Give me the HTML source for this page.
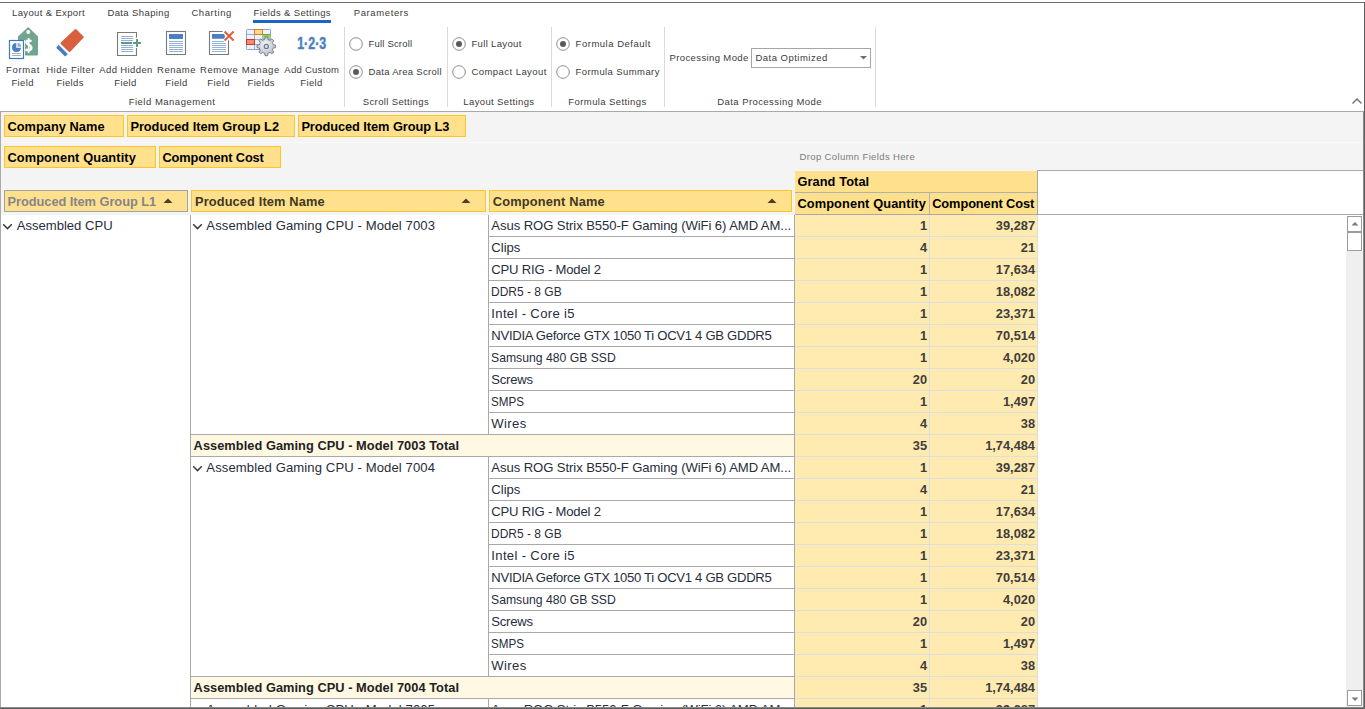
<!DOCTYPE html>
<html><head><meta charset="utf-8"><title>Pivot</title>
<style>
html,body{margin:0;padding:0;}
body{width:1365px;height:709px;overflow:hidden;position:relative;background:#fff;font-family:"Liberation Sans",sans-serif;}
.t{position:absolute;white-space:nowrap;line-height:1.149;}
.r{position:absolute;box-sizing:border-box;}
svg{position:absolute;overflow:visible;}
</style></head><body>
<div class="r" style="left:0px;top:2px;width:1365px;height:1px;background:#6a6a6a;"></div>
<div class="t" style="left:12px;top:8.25px;font-size:9.5px;color:#3b3b3b;letter-spacing:0.360px;">Layout &amp; Export</div>
<div class="t" style="left:107.4px;top:8.25px;font-size:9.5px;color:#3b3b3b;letter-spacing:0.392px;">Data Shaping</div>
<div class="t" style="left:191.4px;top:8.25px;font-size:9.5px;color:#3b3b3b;letter-spacing:0.568px;">Charting</div>
<div class="t" style="left:253.5px;top:8.25px;font-size:9.5px;color:#3b3b3b;letter-spacing:0.360px;">Fields &amp; Settings</div>
<div class="t" style="left:353.7px;top:8.25px;font-size:9.5px;color:#3b3b3b;letter-spacing:0.617px;">Parameters</div>
<div class="r" style="left:253px;top:20px;width:78px;height:3px;background:#1a65c6;"></div>
<div class="t" style="left:-17.0px;width:80px;text-align:center;top:65.25px;font-size:9.5px;color:#3b3b3b;letter-spacing:0.651px;">Format</div>
<div class="t" style="left:-17.4px;width:80px;text-align:center;top:78.25px;font-size:9.5px;color:#3b3b3b;letter-spacing:0.373px;">Field</div>
<div class="t" style="left:30.599999999999994px;width:80px;text-align:center;top:65.25px;font-size:9.5px;color:#3b3b3b;letter-spacing:0.488px;">Hide Filter</div>
<div class="t" style="left:30.099999999999994px;width:80px;text-align:center;top:78.25px;font-size:9.5px;color:#3b3b3b;letter-spacing:0.322px;">Fields</div>
<div class="t" style="left:86.0px;width:80px;text-align:center;top:65.25px;font-size:9.5px;color:#3b3b3b;letter-spacing:0.382px;">Add Hidden</div>
<div class="t" style="left:85.5px;width:80px;text-align:center;top:78.25px;font-size:9.5px;color:#3b3b3b;letter-spacing:0.373px;">Field</div>
<div class="t" style="left:136.5px;width:80px;text-align:center;top:65.25px;font-size:9.5px;color:#3b3b3b;letter-spacing:0.495px;">Rename</div>
<div class="t" style="left:136.5px;width:80px;text-align:center;top:78.25px;font-size:9.5px;color:#3b3b3b;letter-spacing:0.373px;">Field</div>
<div class="t" style="left:179.2px;width:80px;text-align:center;top:65.25px;font-size:9.5px;color:#3b3b3b;letter-spacing:0.462px;">Remove</div>
<div class="t" style="left:178.6px;width:80px;text-align:center;top:78.25px;font-size:9.5px;color:#3b3b3b;letter-spacing:0.373px;">Field</div>
<div class="t" style="left:220.89999999999998px;width:80px;text-align:center;top:65.25px;font-size:9.5px;color:#3b3b3b;letter-spacing:0.631px;">Manage</div>
<div class="t" style="left:221.2px;width:80px;text-align:center;top:78.25px;font-size:9.5px;color:#3b3b3b;letter-spacing:0.322px;">Fields</div>
<div class="t" style="left:271.8px;width:80px;text-align:center;top:65.25px;font-size:9.5px;color:#3b3b3b;letter-spacing:0.271px;">Add Custom</div>
<div class="t" style="left:271.5px;width:80px;text-align:center;top:78.25px;font-size:9.5px;color:#3b3b3b;letter-spacing:0.373px;">Field</div>
<div class="t" style="left:112.0px;width:120px;text-align:center;top:97.25px;font-size:9.5px;color:#3b3b3b;letter-spacing:0.504px;">Field Management</div>
<div class="r" style="left:344px;top:27px;width:1px;height:80px;background:#dadada;"></div>
<div class="r" style="left:447px;top:27px;width:1px;height:80px;background:#dadada;"></div>
<div class="r" style="left:551px;top:27px;width:1px;height:80px;background:#dadada;"></div>
<div class="r" style="left:664px;top:27px;width:1px;height:80px;background:#dadada;"></div>
<div class="r" style="left:875px;top:27px;width:1px;height:80px;background:#dadada;"></div>
<svg style="left:349px;top:37px" width="14" height="14"><circle cx="7" cy="7" r="6.3" fill="#fff" stroke="#8c8c8c" stroke-width="1"/></svg>
<svg style="left:349px;top:65px" width="14" height="14"><circle cx="7" cy="7" r="6.3" fill="#fff" stroke="#8c8c8c" stroke-width="1"/><circle cx="7" cy="7" r="3" fill="#5a5a5a"/></svg>
<div class="t" style="left:368.5px;top:39.25px;font-size:9.5px;color:#3b3b3b;letter-spacing:0.191px;">Full Scroll</div>
<div class="t" style="left:368.5px;top:67.25px;font-size:9.5px;color:#3b3b3b;letter-spacing:0.296px;">Data Area Scroll</div>
<svg style="left:451.6px;top:37px" width="14" height="14"><circle cx="7" cy="7" r="6.3" fill="#fff" stroke="#8c8c8c" stroke-width="1"/><circle cx="7" cy="7" r="3" fill="#5a5a5a"/></svg>
<svg style="left:451.6px;top:65px" width="14" height="14"><circle cx="7" cy="7" r="6.3" fill="#fff" stroke="#8c8c8c" stroke-width="1"/></svg>
<div class="t" style="left:471.4px;top:39.25px;font-size:9.5px;color:#3b3b3b;letter-spacing:0.347px;">Full Layout</div>
<div class="t" style="left:471.4px;top:67.25px;font-size:9.5px;color:#3b3b3b;letter-spacing:0.451px;">Compact Layout</div>
<svg style="left:555.8px;top:37px" width="14" height="14"><circle cx="7" cy="7" r="6.3" fill="#fff" stroke="#8c8c8c" stroke-width="1"/><circle cx="7" cy="7" r="3" fill="#5a5a5a"/></svg>
<svg style="left:555.8px;top:65px" width="14" height="14"><circle cx="7" cy="7" r="6.3" fill="#fff" stroke="#8c8c8c" stroke-width="1"/></svg>
<div class="t" style="left:575.6px;top:39.25px;font-size:9.5px;color:#3b3b3b;letter-spacing:0.511px;">Formula Default</div>
<div class="t" style="left:575.6px;top:67.25px;font-size:9.5px;color:#3b3b3b;letter-spacing:0.409px;">Formula Summary</div>
<div class="t" style="left:335.9px;width:120px;text-align:center;top:97.25px;font-size:9.5px;color:#3b3b3b;letter-spacing:0.366px;">Scroll Settings</div>
<div class="t" style="left:438.9px;width:120px;text-align:center;top:97.25px;font-size:9.5px;color:#3b3b3b;letter-spacing:0.376px;">Layout Settings</div>
<div class="t" style="left:547.5px;width:120px;text-align:center;top:97.25px;font-size:9.5px;color:#3b3b3b;letter-spacing:0.403px;">Formula Settings</div>
<div class="t" style="left:689.6px;width:160px;text-align:center;top:97.25px;font-size:9.5px;color:#3b3b3b;letter-spacing:0.420px;">Data Processing Mode</div>
<div class="t" style="left:669.5px;top:53.25px;font-size:9.5px;color:#3b3b3b;letter-spacing:0.385px;">Processing Mode</div>
<div class="r" style="left:751px;top:48px;width:120px;height:20px;background:#fff;box-shadow:inset 0 0 0 1px #a6a6a6;"></div>
<div class="t" style="left:755.4px;top:53.25px;font-size:9.5px;color:#3b3b3b;letter-spacing:0.493px;">Data Optimized</div>
<svg style="left:860px;top:56px" width="8" height="4"><path d="M0 0H7L3.5 3.5Z" fill="#6e6e6e"/></svg>
<svg style="left:1350px;top:96px" width="14" height="10"><path d="M2.5 7.5L7 3L11.5 7.5" fill="none" stroke="#6e6e6e" stroke-width="1.3"/></svg>
<svg style="left:0;top:0" width="345" height="62" viewBox="0 0 345 62">
<!-- Format Field: green tag -->
<path d="M28.2 27 L38 36.6 V54.6 Q38 55.6 37 55.6 H19 Q18 55.6 18 54.6 V36.6 Z" fill="#72a590"/>
<circle cx="28.2" cy="32" r="1.9" fill="#fff"/>
<path d="M31.2 41.6 C30.2 39.9 26.4 39.9 26.3 42.4 C26.2 44.6 31.3 44.6 31.3 47.7 C31.3 50.7 27.1 50.9 25.5 49.1" fill="none" stroke="#fff" stroke-width="2.5"/><path d="M28.7 38 V53" stroke="#fff" stroke-width="1.6"/>
<rect x="9" y="40" width="16" height="19" fill="#fff"/><rect x="9.5" y="40.5" width="14" height="18" fill="#fff" stroke="#3f78c2" stroke-width="1.2"/>
<path d="M16.3 43 A4.5 4.5 0 1 0 21 47.8 H16.3 Z" fill="#4a80c0"/>
<path d="M17.5 43 A3.7 3.7 0 0 1 21.2 46.7 H17.5 Z" fill="#8fb0da"/>
<rect x="12" y="53" width="9" height="0.9" fill="#a8a8a8"/>
<rect x="12" y="55" width="9" height="0.9" fill="#a8a8a8"/>
<!-- Eraser -->
<path d="M74.9 29.2 Q75.6 28.6 76.3 29.2 L83.5 36.4 Q84.1 37.1 83.5 37.8 L70.2 51.8 Q69.5 52.5 68.8 51.8 L60.8 44 Q60.2 43.3 60.8 42.6 Z" fill="#d9603d"/>
<path d="M58.6 44.8 L67.8 54 L65.8 56 Q65.2 56.5 64.5 56 L56.7 48.2 Q56.1 47.6 56.6 46.9 Z" fill="#4a80c0"/>
<!-- Add Hidden Field -->
<path d="M136.5 37.8 V32.5 H117.5 V55.5 H136.5 V48" fill="none" stroke="#7a7a7a" stroke-width="1.1"/>
<g fill="#94b2da">
<rect x="121" y="36" width="12" height="1"/><rect x="121" y="38" width="12" height="1"/><rect x="121" y="40" width="12" height="1"/>
<rect x="121" y="45" width="12" height="1"/><rect x="121" y="47" width="12" height="1"/><rect x="121" y="49" width="12" height="1"/><rect x="121" y="51" width="12" height="1"/>
</g>
<g fill="#5f9c80">
<rect x="121" y="42" width="11" height="2"/><rect x="133" y="42" width="8" height="2"/><rect x="136" y="39" width="2" height="8"/>
</g>
<!-- Rename Field -->
<rect x="166.5" y="31.5" width="19" height="23" fill="#fff" stroke="#7a7a7a" stroke-width="1.1"/>
<rect x="169" y="34" width="14" height="5" fill="#4a80c0"/>
<g fill="#94b2da">
<rect x="169" y="41" width="14" height="1"/><rect x="169" y="43" width="14" height="1"/><rect x="169" y="45" width="14" height="1"/>
<rect x="169" y="47" width="14" height="1"/><rect x="169" y="49" width="14" height="1"/><rect x="169" y="51" width="14" height="1"/>
</g>
<!-- Remove Field -->
<path d="M222.7 31.5 H209.5 V54.5 H228.5 V40.2" fill="none" stroke="#7a7a7a" stroke-width="1.1"/>
<path d="M212 34 H224 L225.2 36.4 L224 38.8 H212 Z" fill="#4a80c0"/>
<g fill="#94b2da">
<rect x="212" y="41" width="12" height="1"/><rect x="212" y="43" width="14" height="1"/><rect x="212" y="45" width="14" height="1"/>
<rect x="212" y="47" width="14" height="1"/><rect x="212" y="49" width="14" height="1"/><rect x="212" y="51" width="14" height="1"/>
</g>
<path d="M224.6 31.4 L233.6 40.4 M233.6 31.4 L224.6 40.4" stroke="#e0603c" stroke-width="2.1"/>
<!-- Manage Fields -->
<rect x="246.5" y="29.5" width="24" height="20" rx="0.8" fill="#eef2fb" stroke="#8aa2d4" stroke-width="1"/>
<path d="M254.5 29.5 V49.5 M262.5 29.5 V49.5 M246.5 34.5 H270.5 M246.5 39.5 H270.5 M246.5 44.5 H270.5" stroke="#8fa6d6" stroke-width="0.9"/>
<rect x="254.5" y="29.5" width="8" height="5" fill="#f9da8e" stroke="#d97b1e" stroke-width="1"/>
<rect x="246.5" y="39.5" width="8" height="5" fill="#f28b7c" stroke="#cc3a2a" stroke-width="1"/>
<rect x="262.5" y="34.5" width="8" height="5" fill="#a8d585"/>
<path d="M262.5 34.5 H270.5" stroke="#6aa73a" stroke-width="1"/><path d="M263.2 35.5 H269.6 L266.4 38.8 Z" fill="#7fbf4a"/>
<defs><radialGradient id="gg" cx="0.45" cy="0.4" r="0.6"><stop offset="0" stop-color="#f4f6f9"/><stop offset="1" stop-color="#b4bcc8"/></radialGradient></defs>
<path id="gear" fill="url(#gg)" stroke="#6f7787" stroke-width="0.9" d="M264.64 39.50 L264.99 37.19 A9.30 9.30 0 0 1 267.61 37.19 L267.96 39.50 A7.10 7.10 0 0 1 270.01 40.35 L271.88 38.96 A9.30 9.30 0 0 1 273.74 40.82 L272.35 42.69 A7.10 7.10 0 0 1 273.20 44.74 L275.51 45.09 A9.30 9.30 0 0 1 275.51 47.71 L273.20 48.06 A7.10 7.10 0 0 1 272.35 50.11 L273.74 51.98 A9.30 9.30 0 0 1 271.88 53.84 L270.01 52.45 A7.10 7.10 0 0 1 267.96 53.30 L267.61 55.61 A9.30 9.30 0 0 1 264.99 55.61 L264.64 53.30 A7.10 7.10 0 0 1 262.59 52.45 L260.72 53.84 A9.30 9.30 0 0 1 258.86 51.98 L260.25 50.11 A7.10 7.10 0 0 1 259.40 48.06 L257.09 47.71 A9.30 9.30 0 0 1 257.09 45.09 L259.40 44.74 A7.10 7.10 0 0 1 260.25 42.69 L258.86 40.82 A9.30 9.30 0 0 1 260.72 38.96 L262.59 40.35 A7.10 7.10 0 0 1 264.64 39.50 Z"/>
<circle cx="266.3" cy="46.4" r="2.1" fill="#d5dae2" stroke="#6d7584" stroke-width="1.1"/>
<!-- 1·2·3 -->
<text x="297.2" y="48.7" font-family="Liberation Sans" font-weight="bold" font-size="15.8" fill="#4a80c0" stroke="#4a80c0" stroke-width="0.45" textLength="29" lengthAdjust="spacingAndGlyphs">1·2·3</text>
</svg>

<div class="r" style="left:1px;top:112px;width:1362px;height:597px;background:#f4f4f4;"></div>
<div class="r" style="left:0px;top:111px;width:1365px;height:1px;background:#a8a8a8;"></div>
<div class="r" style="left:0px;top:111px;width:1px;height:598px;background:#aaaaaa;"></div>
<div class="r" style="left:1px;top:142px;width:1362px;height:1px;background:#fbfbfb;"></div>
<div class="r" style="left:4px;top:115px;width:120px;height:22px;background:#ffe08c;box-shadow:inset 0 0 0 1px #ffc425;"></div>
<div class="t" style="left:7.4px;top:120.21px;font-size:12.8px;color:#000;font-weight:bold;letter-spacing:0.037px;">Company Name</div>
<div class="r" style="left:127px;top:115px;width:168px;height:22px;background:#ffe08c;box-shadow:inset 0 0 0 1px #ffc425;"></div>
<div class="t" style="left:130.4px;top:120.21px;font-size:12.8px;color:#000;font-weight:bold;letter-spacing:-0.033px;">Produced Item Group L2</div>
<div class="r" style="left:298px;top:115px;width:168px;height:22px;background:#ffe08c;box-shadow:inset 0 0 0 1px #ffc425;"></div>
<div class="t" style="left:301.4px;top:120.21px;font-size:12.8px;color:#000;font-weight:bold;letter-spacing:-0.067px;">Produced Item Group L3</div>
<div class="r" style="left:4px;top:146px;width:152px;height:22px;background:#ffe08c;box-shadow:inset 0 0 0 1px #ffc425;"></div>
<div class="t" style="left:7.4px;top:151.21px;font-size:12.8px;color:#000;font-weight:bold;letter-spacing:0.111px;">Component Quantity</div>
<div class="r" style="left:159px;top:146px;width:122px;height:22px;background:#ffe08c;box-shadow:inset 0 0 0 1px #ffc425;"></div>
<div class="t" style="left:162.4px;top:151.21px;font-size:12.8px;color:#000;font-weight:bold;letter-spacing:-0.124px;">Component Cost</div>
<div class="t" style="left:799.5px;top:152.25px;font-size:9.5px;color:#7c7c7c;letter-spacing:0.364px;">Drop Column Fields Here</div>
<div class="r" style="left:4px;top:190px;width:184px;height:22px;background:#ffe08c;box-shadow:inset 0 0 0 1px #a3a3a3;"></div>
<div class="t" style="left:7.5px;top:195.21px;font-size:12.8px;color:#85858d;font-weight:bold;letter-spacing:-0.033px;">Produced Item Group L1</div>
<svg style="left:163px;top:198px" width="10" height="6"><path d="M0.5 5H9.5L5 0.5Z" fill="#4a4026"/></svg>
<div class="r" style="left:191px;top:190px;width:295px;height:22px;background:#ffe08c;box-shadow:inset 0 0 0 1px #ffc425;"></div>
<div class="t" style="left:195px;top:195.21px;font-size:12.8px;color:#40381e;font-weight:bold;letter-spacing:0.131px;">Produced Item Name</div>
<svg style="left:461px;top:198px" width="10" height="6"><path d="M0.5 5H9.5L5 0.5Z" fill="#4a4026"/></svg>
<div class="r" style="left:489px;top:190px;width:303px;height:22px;background:#ffe08c;box-shadow:inset 0 0 0 1px #ffc425;"></div>
<div class="t" style="left:492.8px;top:195.21px;font-size:12.8px;color:#40381e;font-weight:bold;letter-spacing:0.187px;">Component Name</div>
<svg style="left:766.5px;top:198px" width="10" height="6"><path d="M0.5 5H9.5L5 0.5Z" fill="#4a4026"/></svg>
<div class="r" style="left:1037px;top:170px;width:326px;height:1px;background:#a8a8a8;"></div>
<div class="r" style="left:1038px;top:171px;width:325px;height:43px;background:#fff;"></div>
<div class="r" style="left:795px;top:171px;width:242px;height:21px;background:#ffe08c;"></div>
<div class="r" style="left:795px;top:192px;width:242px;height:1px;background:#b0b0b0;"></div>
<div class="r" style="left:795px;top:193px;width:242px;height:21px;background:#ffe08c;"></div>
<div class="r" style="left:929px;top:193px;width:1px;height:21px;background:#b0b0b0;"></div>
<div class="r" style="left:1037px;top:170px;width:1px;height:44px;background:#a8a8a8;"></div>
<div class="r" style="left:795px;top:214px;width:568px;height:1px;background:#a8a8a8;"></div>
<div class="t" style="left:797.4px;top:175.21px;font-size:12.8px;color:#000;font-weight:bold;letter-spacing:0.090px;">Grand Total</div>
<div class="t" style="left:797.4px;top:197.21px;font-size:12.8px;color:#000;font-weight:bold;letter-spacing:0.111px;">Component Quantity</div>
<div class="t" style="left:932.2px;top:197.21px;font-size:12.8px;color:#000;font-weight:bold;letter-spacing:-0.078px;">Component Cost</div>
<div class="r" style="left:1px;top:215px;width:1345px;height:492px;background:#fff;"></div>
<div style="position:absolute;left:0;top:215px;width:1346px;height:492px;overflow:hidden">
<div style="position:absolute;left:0;top:-215px;width:1365px;height:709px">
<svg style="left:2.2px;top:223px" width="12" height="8"><path d="M1.2 1.3L5.5 5.6L9.8 1.3" fill="none" stroke="#3a3a3a" stroke-width="1.45"/></svg>
<div class="t" style="left:16.7px;top:217.93px;font-size:13.1px;color:#272d3b;letter-spacing:-0.008px;">Assembled CPU</div>
<svg style="left:192px;top:223px" width="12" height="8"><path d="M1.2 1.3L5.5 5.6L9.8 1.3" fill="none" stroke="#3a3a3a" stroke-width="1.45"/></svg>
<div class="t" style="left:206.3px;top:217.93px;font-size:13.1px;color:#272d3b;letter-spacing:0.096px;">Assembled Gaming CPU - Model 7003</div>
<div class="r" style="left:795px;top:215px;width:242px;height:22px;background:#ffeab0;"></div>
<div class="t" style="left:491.3px;top:217.93px;font-size:13.1px;color:#272d3b;letter-spacing:-0.078px;">Asus ROG Strix B550-F Gaming (WiFi 6) AMD AM...</div>
<div class="t" style="left:867px;width:60px;text-align:right;top:219.21px;font-size:12.8px;color:#3d3d3d;font-weight:bold;">1</div>
<div class="t" style="left:955px;width:80px;text-align:right;top:219.21px;font-size:12.8px;color:#3d3d3d;font-weight:bold;">39,287</div>
<div class="r" style="left:489px;top:236px;width:305px;height:1px;background:#a9a9a9;"></div>
<div class="r" style="left:795px;top:236px;width:242px;height:1px;background:#dedede;"></div>
<div class="r" style="left:795px;top:237px;width:242px;height:22px;background:#ffeab0;"></div>
<div class="t" style="left:491.3px;top:239.93px;font-size:13.1px;color:#272d3b;letter-spacing:-0.014px;">Clips</div>
<div class="t" style="left:867px;width:60px;text-align:right;top:241.21px;font-size:12.8px;color:#3d3d3d;font-weight:bold;">4</div>
<div class="t" style="left:955px;width:80px;text-align:right;top:241.21px;font-size:12.8px;color:#3d3d3d;font-weight:bold;">21</div>
<div class="r" style="left:489px;top:258px;width:305px;height:1px;background:#a9a9a9;"></div>
<div class="r" style="left:795px;top:258px;width:242px;height:1px;background:#dedede;"></div>
<div class="r" style="left:795px;top:259px;width:242px;height:22px;background:#ffeab0;"></div>
<div class="t" style="left:491.3px;top:261.93px;font-size:13.1px;color:#272d3b;letter-spacing:-0.194px;">CPU RIG - Model 2</div>
<div class="t" style="left:867px;width:60px;text-align:right;top:263.21px;font-size:12.8px;color:#3d3d3d;font-weight:bold;">1</div>
<div class="t" style="left:955px;width:80px;text-align:right;top:263.21px;font-size:12.8px;color:#3d3d3d;font-weight:bold;">17,634</div>
<div class="r" style="left:489px;top:280px;width:305px;height:1px;background:#a9a9a9;"></div>
<div class="r" style="left:795px;top:280px;width:242px;height:1px;background:#dedede;"></div>
<div class="r" style="left:795px;top:281px;width:242px;height:22px;background:#ffeab0;"></div>
<div class="t" style="left:491.3px;top:283.93px;font-size:13.1px;color:#272d3b;transform:scaleX(0.9163);transform-origin:0 0;">DDR5 - 8 GB</div>
<div class="t" style="left:867px;width:60px;text-align:right;top:285.21px;font-size:12.8px;color:#3d3d3d;font-weight:bold;">1</div>
<div class="t" style="left:955px;width:80px;text-align:right;top:285.21px;font-size:12.8px;color:#3d3d3d;font-weight:bold;">18,082</div>
<div class="r" style="left:489px;top:302px;width:305px;height:1px;background:#a9a9a9;"></div>
<div class="r" style="left:795px;top:302px;width:242px;height:1px;background:#dedede;"></div>
<div class="r" style="left:795px;top:303px;width:242px;height:22px;background:#ffeab0;"></div>
<div class="t" style="left:491.3px;top:305.93px;font-size:13.1px;color:#272d3b;letter-spacing:0.335px;">Intel - Core i5</div>
<div class="t" style="left:867px;width:60px;text-align:right;top:307.21px;font-size:12.8px;color:#3d3d3d;font-weight:bold;">1</div>
<div class="t" style="left:955px;width:80px;text-align:right;top:307.21px;font-size:12.8px;color:#3d3d3d;font-weight:bold;">23,371</div>
<div class="r" style="left:489px;top:324px;width:305px;height:1px;background:#a9a9a9;"></div>
<div class="r" style="left:795px;top:324px;width:242px;height:1px;background:#dedede;"></div>
<div class="r" style="left:795px;top:325px;width:242px;height:22px;background:#ffeab0;"></div>
<div class="t" style="left:491.3px;top:327.93px;font-size:13.1px;color:#272d3b;letter-spacing:-0.295px;">NVIDIA Geforce GTX 1050 Ti OCV1 4 GB GDDR5</div>
<div class="t" style="left:867px;width:60px;text-align:right;top:329.21px;font-size:12.8px;color:#3d3d3d;font-weight:bold;">1</div>
<div class="t" style="left:955px;width:80px;text-align:right;top:329.21px;font-size:12.8px;color:#3d3d3d;font-weight:bold;">70,514</div>
<div class="r" style="left:489px;top:346px;width:305px;height:1px;background:#a9a9a9;"></div>
<div class="r" style="left:795px;top:346px;width:242px;height:1px;background:#dedede;"></div>
<div class="r" style="left:795px;top:347px;width:242px;height:22px;background:#ffeab0;"></div>
<div class="t" style="left:491.3px;top:349.93px;font-size:13.1px;color:#272d3b;transform:scaleX(0.9314);transform-origin:0 0;">Samsung 480 GB SSD</div>
<div class="t" style="left:867px;width:60px;text-align:right;top:351.21px;font-size:12.8px;color:#3d3d3d;font-weight:bold;">1</div>
<div class="t" style="left:955px;width:80px;text-align:right;top:351.21px;font-size:12.8px;color:#3d3d3d;font-weight:bold;">4,020</div>
<div class="r" style="left:489px;top:368px;width:305px;height:1px;background:#a9a9a9;"></div>
<div class="r" style="left:795px;top:368px;width:242px;height:1px;background:#dedede;"></div>
<div class="r" style="left:795px;top:369px;width:242px;height:22px;background:#ffeab0;"></div>
<div class="t" style="left:491.3px;top:371.93px;font-size:13.1px;color:#272d3b;letter-spacing:-0.236px;">Screws</div>
<div class="t" style="left:867px;width:60px;text-align:right;top:373.21px;font-size:12.8px;color:#3d3d3d;font-weight:bold;">20</div>
<div class="t" style="left:955px;width:80px;text-align:right;top:373.21px;font-size:12.8px;color:#3d3d3d;font-weight:bold;">20</div>
<div class="r" style="left:489px;top:390px;width:305px;height:1px;background:#a9a9a9;"></div>
<div class="r" style="left:795px;top:390px;width:242px;height:1px;background:#dedede;"></div>
<div class="r" style="left:795px;top:391px;width:242px;height:22px;background:#ffeab0;"></div>
<div class="t" style="left:491.3px;top:393.93px;font-size:13.1px;color:#272d3b;transform:scaleX(0.8883);transform-origin:0 0;">SMPS</div>
<div class="t" style="left:867px;width:60px;text-align:right;top:395.21px;font-size:12.8px;color:#3d3d3d;font-weight:bold;">1</div>
<div class="t" style="left:955px;width:80px;text-align:right;top:395.21px;font-size:12.8px;color:#3d3d3d;font-weight:bold;">1,497</div>
<div class="r" style="left:489px;top:412px;width:305px;height:1px;background:#a9a9a9;"></div>
<div class="r" style="left:795px;top:412px;width:242px;height:1px;background:#dedede;"></div>
<div class="r" style="left:795px;top:413px;width:242px;height:22px;background:#ffeab0;"></div>
<div class="t" style="left:491.3px;top:415.93px;font-size:13.1px;color:#272d3b;letter-spacing:0.373px;">Wires</div>
<div class="t" style="left:867px;width:60px;text-align:right;top:417.21px;font-size:12.8px;color:#3d3d3d;font-weight:bold;">4</div>
<div class="t" style="left:955px;width:80px;text-align:right;top:417.21px;font-size:12.8px;color:#3d3d3d;font-weight:bold;">38</div>
<div class="r" style="left:489px;top:434px;width:305px;height:1px;background:#a9a9a9;"></div>
<div class="r" style="left:795px;top:434px;width:242px;height:1px;background:#dedede;"></div>
<div class="r" style="left:191px;top:435px;width:603px;height:21px;background:#fff8e2;"></div>
<div class="r" style="left:795px;top:435px;width:242px;height:22px;background:#ffeab0;"></div>
<div class="r" style="left:191px;top:434px;width:603px;height:1px;background:#a9a9a9;"></div>
<div class="r" style="left:191px;top:456px;width:603px;height:1px;background:#a9a9a9;"></div>
<div class="r" style="left:795px;top:456px;width:242px;height:1px;background:#dedede;"></div>
<div class="t" style="left:193.6px;top:439.21px;font-size:12.8px;color:#222;font-weight:bold;letter-spacing:0.047px;">Assembled Gaming CPU - Model 7003 Total</div>
<div class="t" style="left:867px;width:60px;text-align:right;top:439.21px;font-size:12.8px;color:#3d3d3d;font-weight:bold;">35</div>
<div class="t" style="left:955px;width:80px;text-align:right;top:439.21px;font-size:12.8px;color:#3d3d3d;font-weight:bold;">1,74,484</div>
<svg style="left:192px;top:465px" width="12" height="8"><path d="M1.2 1.3L5.5 5.6L9.8 1.3" fill="none" stroke="#3a3a3a" stroke-width="1.45"/></svg>
<div class="t" style="left:206.3px;top:459.93px;font-size:13.1px;color:#272d3b;letter-spacing:0.096px;">Assembled Gaming CPU - Model 7004</div>
<div class="r" style="left:795px;top:457px;width:242px;height:22px;background:#ffeab0;"></div>
<div class="t" style="left:491.3px;top:459.93px;font-size:13.1px;color:#272d3b;letter-spacing:-0.078px;">Asus ROG Strix B550-F Gaming (WiFi 6) AMD AM...</div>
<div class="t" style="left:867px;width:60px;text-align:right;top:461.21px;font-size:12.8px;color:#3d3d3d;font-weight:bold;">1</div>
<div class="t" style="left:955px;width:80px;text-align:right;top:461.21px;font-size:12.8px;color:#3d3d3d;font-weight:bold;">39,287</div>
<div class="r" style="left:489px;top:478px;width:305px;height:1px;background:#a9a9a9;"></div>
<div class="r" style="left:795px;top:478px;width:242px;height:1px;background:#dedede;"></div>
<div class="r" style="left:795px;top:479px;width:242px;height:22px;background:#ffeab0;"></div>
<div class="t" style="left:491.3px;top:481.93px;font-size:13.1px;color:#272d3b;letter-spacing:-0.014px;">Clips</div>
<div class="t" style="left:867px;width:60px;text-align:right;top:483.21px;font-size:12.8px;color:#3d3d3d;font-weight:bold;">4</div>
<div class="t" style="left:955px;width:80px;text-align:right;top:483.21px;font-size:12.8px;color:#3d3d3d;font-weight:bold;">21</div>
<div class="r" style="left:489px;top:500px;width:305px;height:1px;background:#a9a9a9;"></div>
<div class="r" style="left:795px;top:500px;width:242px;height:1px;background:#dedede;"></div>
<div class="r" style="left:795px;top:501px;width:242px;height:22px;background:#ffeab0;"></div>
<div class="t" style="left:491.3px;top:503.93px;font-size:13.1px;color:#272d3b;letter-spacing:-0.194px;">CPU RIG - Model 2</div>
<div class="t" style="left:867px;width:60px;text-align:right;top:505.21px;font-size:12.8px;color:#3d3d3d;font-weight:bold;">1</div>
<div class="t" style="left:955px;width:80px;text-align:right;top:505.21px;font-size:12.8px;color:#3d3d3d;font-weight:bold;">17,634</div>
<div class="r" style="left:489px;top:522px;width:305px;height:1px;background:#a9a9a9;"></div>
<div class="r" style="left:795px;top:522px;width:242px;height:1px;background:#dedede;"></div>
<div class="r" style="left:795px;top:523px;width:242px;height:22px;background:#ffeab0;"></div>
<div class="t" style="left:491.3px;top:525.93px;font-size:13.1px;color:#272d3b;transform:scaleX(0.9163);transform-origin:0 0;">DDR5 - 8 GB</div>
<div class="t" style="left:867px;width:60px;text-align:right;top:527.21px;font-size:12.8px;color:#3d3d3d;font-weight:bold;">1</div>
<div class="t" style="left:955px;width:80px;text-align:right;top:527.21px;font-size:12.8px;color:#3d3d3d;font-weight:bold;">18,082</div>
<div class="r" style="left:489px;top:544px;width:305px;height:1px;background:#a9a9a9;"></div>
<div class="r" style="left:795px;top:544px;width:242px;height:1px;background:#dedede;"></div>
<div class="r" style="left:795px;top:545px;width:242px;height:22px;background:#ffeab0;"></div>
<div class="t" style="left:491.3px;top:547.93px;font-size:13.1px;color:#272d3b;letter-spacing:0.335px;">Intel - Core i5</div>
<div class="t" style="left:867px;width:60px;text-align:right;top:549.21px;font-size:12.8px;color:#3d3d3d;font-weight:bold;">1</div>
<div class="t" style="left:955px;width:80px;text-align:right;top:549.21px;font-size:12.8px;color:#3d3d3d;font-weight:bold;">23,371</div>
<div class="r" style="left:489px;top:566px;width:305px;height:1px;background:#a9a9a9;"></div>
<div class="r" style="left:795px;top:566px;width:242px;height:1px;background:#dedede;"></div>
<div class="r" style="left:795px;top:567px;width:242px;height:22px;background:#ffeab0;"></div>
<div class="t" style="left:491.3px;top:569.93px;font-size:13.1px;color:#272d3b;letter-spacing:-0.295px;">NVIDIA Geforce GTX 1050 Ti OCV1 4 GB GDDR5</div>
<div class="t" style="left:867px;width:60px;text-align:right;top:571.21px;font-size:12.8px;color:#3d3d3d;font-weight:bold;">1</div>
<div class="t" style="left:955px;width:80px;text-align:right;top:571.21px;font-size:12.8px;color:#3d3d3d;font-weight:bold;">70,514</div>
<div class="r" style="left:489px;top:588px;width:305px;height:1px;background:#a9a9a9;"></div>
<div class="r" style="left:795px;top:588px;width:242px;height:1px;background:#dedede;"></div>
<div class="r" style="left:795px;top:589px;width:242px;height:22px;background:#ffeab0;"></div>
<div class="t" style="left:491.3px;top:591.93px;font-size:13.1px;color:#272d3b;transform:scaleX(0.9314);transform-origin:0 0;">Samsung 480 GB SSD</div>
<div class="t" style="left:867px;width:60px;text-align:right;top:593.21px;font-size:12.8px;color:#3d3d3d;font-weight:bold;">1</div>
<div class="t" style="left:955px;width:80px;text-align:right;top:593.21px;font-size:12.8px;color:#3d3d3d;font-weight:bold;">4,020</div>
<div class="r" style="left:489px;top:610px;width:305px;height:1px;background:#a9a9a9;"></div>
<div class="r" style="left:795px;top:610px;width:242px;height:1px;background:#dedede;"></div>
<div class="r" style="left:795px;top:611px;width:242px;height:22px;background:#ffeab0;"></div>
<div class="t" style="left:491.3px;top:613.93px;font-size:13.1px;color:#272d3b;letter-spacing:-0.236px;">Screws</div>
<div class="t" style="left:867px;width:60px;text-align:right;top:615.21px;font-size:12.8px;color:#3d3d3d;font-weight:bold;">20</div>
<div class="t" style="left:955px;width:80px;text-align:right;top:615.21px;font-size:12.8px;color:#3d3d3d;font-weight:bold;">20</div>
<div class="r" style="left:489px;top:632px;width:305px;height:1px;background:#a9a9a9;"></div>
<div class="r" style="left:795px;top:632px;width:242px;height:1px;background:#dedede;"></div>
<div class="r" style="left:795px;top:633px;width:242px;height:22px;background:#ffeab0;"></div>
<div class="t" style="left:491.3px;top:635.93px;font-size:13.1px;color:#272d3b;transform:scaleX(0.8883);transform-origin:0 0;">SMPS</div>
<div class="t" style="left:867px;width:60px;text-align:right;top:637.21px;font-size:12.8px;color:#3d3d3d;font-weight:bold;">1</div>
<div class="t" style="left:955px;width:80px;text-align:right;top:637.21px;font-size:12.8px;color:#3d3d3d;font-weight:bold;">1,497</div>
<div class="r" style="left:489px;top:654px;width:305px;height:1px;background:#a9a9a9;"></div>
<div class="r" style="left:795px;top:654px;width:242px;height:1px;background:#dedede;"></div>
<div class="r" style="left:795px;top:655px;width:242px;height:22px;background:#ffeab0;"></div>
<div class="t" style="left:491.3px;top:657.93px;font-size:13.1px;color:#272d3b;letter-spacing:0.373px;">Wires</div>
<div class="t" style="left:867px;width:60px;text-align:right;top:659.21px;font-size:12.8px;color:#3d3d3d;font-weight:bold;">4</div>
<div class="t" style="left:955px;width:80px;text-align:right;top:659.21px;font-size:12.8px;color:#3d3d3d;font-weight:bold;">38</div>
<div class="r" style="left:489px;top:676px;width:305px;height:1px;background:#a9a9a9;"></div>
<div class="r" style="left:795px;top:676px;width:242px;height:1px;background:#dedede;"></div>
<div class="r" style="left:191px;top:677px;width:603px;height:21px;background:#fff8e2;"></div>
<div class="r" style="left:795px;top:677px;width:242px;height:22px;background:#ffeab0;"></div>
<div class="r" style="left:191px;top:676px;width:603px;height:1px;background:#a9a9a9;"></div>
<div class="r" style="left:191px;top:698px;width:603px;height:1px;background:#a9a9a9;"></div>
<div class="r" style="left:795px;top:698px;width:242px;height:1px;background:#dedede;"></div>
<div class="t" style="left:193.6px;top:681.21px;font-size:12.8px;color:#222;font-weight:bold;letter-spacing:0.047px;">Assembled Gaming CPU - Model 7004 Total</div>
<div class="t" style="left:867px;width:60px;text-align:right;top:681.21px;font-size:12.8px;color:#3d3d3d;font-weight:bold;">35</div>
<div class="t" style="left:955px;width:80px;text-align:right;top:681.21px;font-size:12.8px;color:#3d3d3d;font-weight:bold;">1,74,484</div>
<svg style="left:192px;top:707px" width="12" height="8"><path d="M1.2 1.3L5.5 5.6L9.8 1.3" fill="none" stroke="#3a3a3a" stroke-width="1.45"/></svg>
<div class="t" style="left:206.3px;top:701.93px;font-size:13.1px;color:#272d3b;letter-spacing:0.096px;">Assembled Gaming CPU - Model 7005</div>
<div class="r" style="left:795px;top:699px;width:242px;height:22px;background:#ffeab0;"></div>
<div class="t" style="left:491.3px;top:701.93px;font-size:13.1px;color:#272d3b;letter-spacing:-0.078px;">Asus ROG Strix B550-F Gaming (WiFi 6) AMD AM...</div>
<div class="t" style="left:867px;width:60px;text-align:right;top:703.21px;font-size:12.8px;color:#3d3d3d;font-weight:bold;">1</div>
<div class="t" style="left:955px;width:80px;text-align:right;top:703.21px;font-size:12.8px;color:#3d3d3d;font-weight:bold;">39,287</div>
<div class="r" style="left:489px;top:720px;width:305px;height:1px;background:#a9a9a9;"></div>
<div class="r" style="left:795px;top:720px;width:242px;height:1px;background:#dedede;"></div>
<div class="r" style="left:190px;top:215px;width:1px;height:492px;background:#a9a9a9;"></div>
<div class="r" style="left:488px;top:215px;width:1px;height:219px;background:#a9a9a9;"></div>
<div class="r" style="left:488px;top:456px;width:1px;height:220px;background:#a9a9a9;"></div>
<div class="r" style="left:488px;top:698px;width:1px;height:10px;background:#a9a9a9;"></div>
<div class="r" style="left:794px;top:215px;width:1px;height:492px;background:#a9a9a9;"></div>
<div class="r" style="left:929px;top:215px;width:1px;height:492px;background:#dedede;"></div>
<div class="r" style="left:1037px;top:215px;width:1px;height:492px;background:#dedede;"></div>
</div></div>
<div class="r" style="left:1346px;top:215px;width:17px;height:492px;background:#efefef;"></div>
<div class="r" style="left:1346px;top:215px;width:17px;height:36px;background:#fff;"></div>
<div class="r" style="left:1347px;top:216px;width:15px;height:16px;background:#fff;box-shadow:inset 0 0 0 1px #9c9c9c;"></div>
<div class="r" style="left:1347px;top:232px;width:15px;height:19px;background:#fff;box-shadow:inset 0 0 0 1px #9c9c9c;"></div>
<svg style="left:1351px;top:221px" width="8" height="5"><path d="M0.5 4.5H7.5L4 1Z" fill="#7a7a7a"/></svg>
<div class="r" style="left:1347px;top:690px;width:15px;height:16px;background:#fff;box-shadow:inset 0 0 0 1px #9c9c9c;"></div>
<svg style="left:1351px;top:697px" width="8" height="5"><path d="M0.5 0.5H7.5L4 4Z" fill="#7a7a7a"/></svg>
<div class="r" style="left:1364px;top:2px;width:1px;height:707px;background:#5e5e5e;"></div>
<div class="r" style="left:1363px;top:112px;width:1px;height:597px;background:#8a8a8a;"></div>
<div class="r" style="left:0px;top:707px;width:1364px;height:1px;background:#8a8a8a;"></div>
<div class="r" style="left:0px;top:708px;width:1365px;height:1px;background:#5c5c5c;"></div>
</body></html>
